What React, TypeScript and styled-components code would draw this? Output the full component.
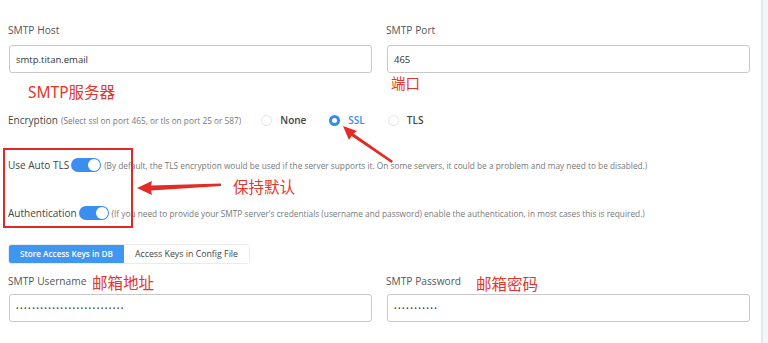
import React from "react";
import styled, { createGlobalStyle } from "styled-components";

const GlobalStyle = createGlobalStyle`
    html, body {
        margin: 0;
        padding: 0;
        background: #f4f6f8;
    }
    body {
        font-family: "Open Sans", "Noto Sans", Arial, sans-serif;
    }
`;

const Page = styled.div`
    position: relative;
    width: 768px;
    height: 343px;
    display: flex;
    overflow: hidden;
    background: #f4f6f8;
`;

const Panel = styled.div`
    width: 763px;
    box-sizing: border-box;
    background: #fff;
    border-right: 2px solid #e3e8ec;
    padding: 22px 0 0 9px;
`;

const FieldGrid = styled.div`
    display: grid;
    grid-template-columns: 363px 363px;
    column-gap: 15px;
`;

const Field = styled.div`
    display: flex;
    flex-direction: column;
`;

const Label = styled.label<{ $gap?: number }>`
    margin-left: -1px;
    margin-bottom: ${(p) => p.$gap ?? 7}px;
    font-size: 10.2px;
    line-height: 16px;
    color: #555;
`;

const Input = styled.input`
    height: 28px;
    box-sizing: border-box;
    border: 1px solid #c9c9c9;
    border-radius: 3px;
    padding: 0 6px;
    font-family: inherit;
    font-size: 9.5px;
    color: #333;
    outline: none;
    &[type="password"] {
        font-size: 7px;
        letter-spacing: 1.4px;
        color: #444;
    }
`;

const OptionRow = styled.div<{ $top: number }>`
    display: flex;
    align-items: center;
    height: 16px;
    margin-top: ${(p) => p.$top}px;
    margin-left: -1px;
`;

const RowTitle = styled.span`
    font-size: 10px;
    color: #444;
    white-space: nowrap;
`;

const Hint = styled.span<{ $left?: number }>`
    margin-left: ${(p) => p.$left ?? 3}px;
    font-size: 8.3px;
    color: #777;
    white-space: nowrap;
`;

const RadioGroup = styled.div`
    display: flex;
    align-items: center;
    margin-left: 20px;
    gap: 23px;
`;

const RadioItem = styled.label<{ $checked?: boolean }>`
    display: flex;
    align-items: center;
    gap: 8px;
    font-size: 10px;
    font-weight: 600;
    color: ${(p) => (p.$checked ? "#3a8ee6" : "#444")};
`;

const RadioDot = styled.span<{ $checked?: boolean }>`
    width: 11px;
    height: 11px;
    box-sizing: border-box;
    border-radius: 50%;
    border: ${(p) => (p.$checked ? "3.5px solid #2f8cf0" : "1px solid #e2e2e2")};
    background: #fff;
`;

const Toggle = styled.span`
    position: relative;
    width: 30px;
    height: 14px;
    margin-left: 2px;
    border-radius: 7px;
    background: #3b8ef0;
    &::after {
        content: "";
        position: absolute;
        right: 1px;
        top: 1px;
        width: 12px;
        height: 12px;
        border-radius: 50%;
        background: #fff;
    }
`;

const Tabs = styled.div`
    display: flex;
    width: fit-content;
    margin-top: 23px;
    margin-left: -1px;
    border: 1px solid #ebebeb;
    border-radius: 3px;
    overflow: hidden;
`;

const Tab = styled.span<{ $active?: boolean }>`
    height: 18px;
    line-height: 18px;
    padding: 0 11px;
    font-size: ${(p) => (p.$active ? 8.2 : 8.8)}px;
    font-weight: ${(p) => (p.$active ? 600 : 400)};
    color: ${(p) => (p.$active ? "#fff" : "#444")};
    background: ${(p) => (p.$active ? "#3f97f2" : "#fff")};
`;

const CredGrid = styled(FieldGrid)`
    margin-top: 9px;
`;

/* annotation layer drawn over the form */
const Note = styled.span<{ $x: number; $y: number; $size?: number }>`
    position: absolute;
    left: ${(p) => p.$x}px;
    top: ${(p) => p.$y}px;
    font-family: "Noto Sans", "Noto Sans CJK SC", sans-serif;
    font-size: ${(p) => p.$size ?? 15.5}px;
    line-height: 1;
    color: #e3352c;
    white-space: nowrap;
`;

const RedBox = styled.div`
    position: absolute;
    left: 3px;
    top: 148px;
    width: 126px;
    height: 76px;
    border: 2px solid #e02a2a;
`;

const Overlay = styled.svg`
    position: absolute;
    left: 0;
    top: 0;
    pointer-events: none;
`;

const Arrows = () => (
    <Overlay width={768} height={343} viewBox="0 0 768 343">
        <path d="M137 188 L152 181 L151 185.5 L221 183.5 L221 186 L151 190.5 L152 195 Z" fill="#e42a24" />
        <path d="M343 126 L357 131 L353.5 133.5 L393 161 L391.5 163 L351.5 136 L349 140 Z" fill="#e42a24" />
    </Overlay>
);

export default function App() {
    return (
        <Page>
            <GlobalStyle />
            <Panel>
                <FieldGrid>
                    <Field>
                        <Label>SMTP Host</Label>
                        <Input readOnly value="smtp.titan.email" />
                    </Field>
                    <Field>
                        <Label>SMTP Port</Label>
                        <Input readOnly value="465" />
                    </Field>
                </FieldGrid>

                <OptionRow $top={39}>
                    <RowTitle>Encryption</RowTitle>
                    <Hint>(Select ssl on port 465, or tls on port 25 or 587)</Hint>
                    <RadioGroup>
                        <RadioItem><RadioDot />None</RadioItem>
                        <RadioItem $checked><RadioDot $checked />SSL</RadioItem>
                        <RadioItem><RadioDot />TLS</RadioItem>
                    </RadioGroup>
                </OptionRow>

                <OptionRow $top={29}>
                    <RowTitle>Use Auto TLS</RowTitle>
                    <Toggle />
                    <Hint>(By default, the TLS encryption would be used if the server supports it. On some servers, it could be a problem and may need to be disabled.)</Hint>
                </OptionRow>

                <OptionRow $top={32}>
                    <RowTitle>Authentication</RowTitle>
                    <Toggle />
                    <Hint>(If you need to provide your SMTP server's credentials (username and password) enable the authentication, in most cases this is required.)</Hint>
                </OptionRow>

                <Tabs>
                    <Tab $active>Store Access Keys in DB</Tab>
                    <Tab>Access Keys in Config File</Tab>
                </Tabs>

                <CredGrid>
                    <Field>
                        <Label $gap={5}>SMTP Username</Label>
                        <Input type="password" readOnly value="xxxxxxxxxxxxxxxxxxxxxxxxxxx" />
                    </Field>
                    <Field>
                        <Label $gap={5}>SMTP Password</Label>
                        <Input type="password" readOnly value="xxxxxxxxxxx" />
                    </Field>
                </CredGrid>
            </Panel>

            <Note $x={28} $y={85}>SMTP服务器</Note>
            <Note $x={391} $y={76} $size={14.5}>端口</Note>
            <Note $x={233} $y={180}>保持默认</Note>
            <Note $x={92} $y={276}>邮箱地址</Note>
            <Note $x={476} $y={277}>邮箱密码</Note>
            <RedBox />
            <Arrows />
        </Page>
    );
}
